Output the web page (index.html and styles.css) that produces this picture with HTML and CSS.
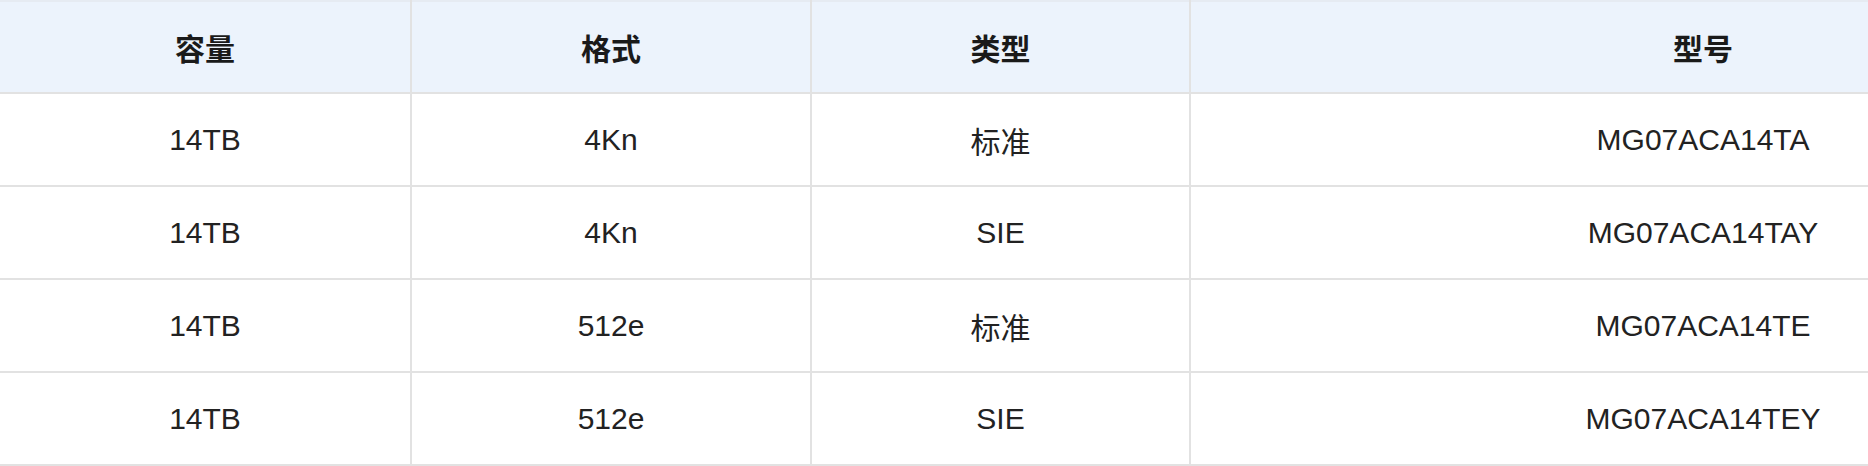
FILE: index.html
```html
<!DOCTYPE html>
<html lang="zh">
<head>
<meta charset="utf-8">
<title>MG07ACA14T</title>
<link rel="stylesheet" href="styles.css">
</head>
<body>
<table class="spec">
  <colgroup>
    <col class="c1"><col class="c2"><col class="c3"><col class="c4">
  </colgroup>
  <thead>
    <tr><th>容量</th><th>格式</th><th>类型</th><th>型号</th></tr>
  </thead>
  <tbody>
    <tr><td>14TB</td><td>4Kn</td><td>标准</td><td>MG07ACA14TA</td></tr>
    <tr><td>14TB</td><td>4Kn</td><td>SIE</td><td>MG07ACA14TAY</td></tr>
    <tr><td>14TB</td><td>512e</td><td>标准</td><td>MG07ACA14TE</td></tr>
    <tr><td>14TB</td><td>512e</td><td>SIE</td><td>MG07ACA14TEY</td></tr>
  </tbody>
</table>
</body>
</html>
```
FILE: styles.css
```css
html, body {
  margin: 0;
  padding: 0;
  background: #ffffff;
  overflow: hidden;
}
.spec {
  border-collapse: collapse;
  table-layout: fixed;
  width: 2216px;
  font-family: "Liberation Sans", "Noto Sans CJK SC", sans-serif;
  font-size: 30px;
  color: #222222;
}
.c1 { width: 411px; }
.c2 { width: 400px; }
.c3 { width: 379px; }
.c4 { width: 1026px; }
.spec th, .spec td {
  border: 2px solid #e2e2e2;
  text-align: center;
  vertical-align: middle;
  padding: 0;
}
.spec th {
  height: 90px;
  background: #ecf3fc;
  font-weight: 700;
  color: #1a1a1a;
  border-top-color: #e6ebf2;
}
.spec td {
  height: 91px;
}
.spec tr > :first-child { border-left: none; }
```
